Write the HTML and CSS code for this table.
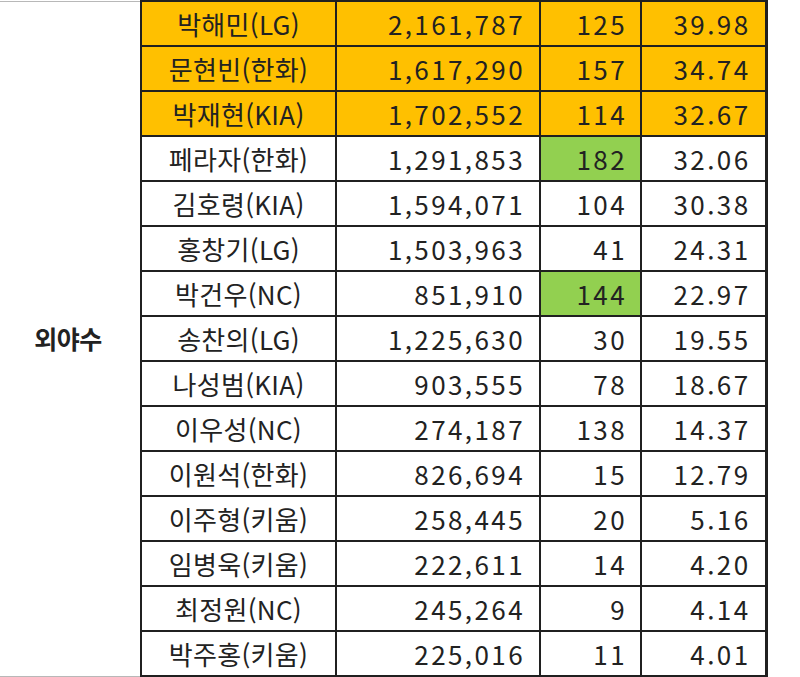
FILE: index.html
```html
<!DOCTYPE html>
<html lang="ko">
<head>
<meta charset="utf-8">
<title>외야수</title>
<link rel="stylesheet" href="styles.css">
</head>
<body>
<div class="sheet">
<table class="stats">
<colgroup>
<col class="c-cat"><col class="c-name"><col class="c-num"><col class="c-cnt"><col class="c-rat">
</colgroup>
<tbody>
<tr class="hl"><td class="cat" rowspan="15">외야수</td><td class="name">박해민(LG)</td><td class="num">2,161,787</td><td class="cnt">125</td><td class="rat">39.98</td></tr>
<tr class="hl"><td class="name">문현빈(한화)</td><td class="num">1,617,290</td><td class="cnt">157</td><td class="rat">34.74</td></tr>
<tr class="hl"><td class="name">박재현(KIA)</td><td class="num">1,702,552</td><td class="cnt">114</td><td class="rat">32.67</td></tr>
<tr><td class="name">페라자(한화)</td><td class="num">1,291,853</td><td class="cnt green">182</td><td class="rat">32.06</td></tr>
<tr><td class="name">김호령(KIA)</td><td class="num">1,594,071</td><td class="cnt">104</td><td class="rat">30.38</td></tr>
<tr><td class="name">홍창기(LG)</td><td class="num">1,503,963</td><td class="cnt">41</td><td class="rat">24.31</td></tr>
<tr><td class="name">박건우(NC)</td><td class="num">851,910</td><td class="cnt green">144</td><td class="rat">22.97</td></tr>
<tr><td class="name">송찬의(LG)</td><td class="num">1,225,630</td><td class="cnt">30</td><td class="rat">19.55</td></tr>
<tr><td class="name">나성범(KIA)</td><td class="num">903,555</td><td class="cnt">78</td><td class="rat">18.67</td></tr>
<tr><td class="name">이우성(NC)</td><td class="num">274,187</td><td class="cnt">138</td><td class="rat">14.37</td></tr>
<tr><td class="name">이원석(한화)</td><td class="num">826,694</td><td class="cnt">15</td><td class="rat">12.79</td></tr>
<tr><td class="name">이주형(키움)</td><td class="num">258,445</td><td class="cnt">20</td><td class="rat">5.16</td></tr>
<tr><td class="name">임병욱(키움)</td><td class="num">222,611</td><td class="cnt">14</td><td class="rat">4.20</td></tr>
<tr><td class="name">최정원(NC)</td><td class="num">245,264</td><td class="cnt">9</td><td class="rat">4.14</td></tr>
<tr><td class="name">박주홍(키움)</td><td class="num">225,016</td><td class="cnt">11</td><td class="rat">4.01</td></tr>
</tbody>
</table>
</div>
</body>
</html>
```
FILE: styles.css
```css
html, body {
  margin: 0;
  padding: 0;
  background: #ffffff;
}

body {
  font-family: "Noto Sans CJK KR", "Noto Sans", sans-serif;
  color: #222222;
}

.sheet {
  width: 800px;
  border-bottom: 1px solid #c4c4c4;
}

.stats {
  border-collapse: collapse;
  table-layout: fixed;
  width: 766px;
}

.c-cat { width: 141px; }
.c-name { width: 195px; }
.c-num { width: 204px; }
.c-cnt { width: 101px; }
.c-rat { width: 125px; }

.stats tr {
  height: 45px;
}

.stats td {
  border: 2px solid #202020;
  padding: 0;
  font-size: 26px;
  line-height: 1;
  white-space: nowrap;
  overflow: hidden;
}

.stats td.cat {
  border-left: none;
  border-top: 1px solid #b8b8b8;
  border-bottom: 1px solid #b8b8b8;
  text-align: center;
  font-weight: 700;
  font-size: 25px;
  letter-spacing: -0.5px;
  padding-right: 4px;
}

.name {
  text-align: center;
  letter-spacing: 0.3px;
}

.num, .cnt, .rat {
  text-align: right;
  font-size: 29px;
  letter-spacing: 2.4px;
}

.stats td.num { padding-right: 14px; }
.stats td.cnt { padding-right: 13px; }
.stats td.rat { padding-right: 14px; border-right-width: 3px; }

.hl td:not(.cat) {
  background: #ffc000;
}

.stats td.green {
  background: #92d050;
}
```
